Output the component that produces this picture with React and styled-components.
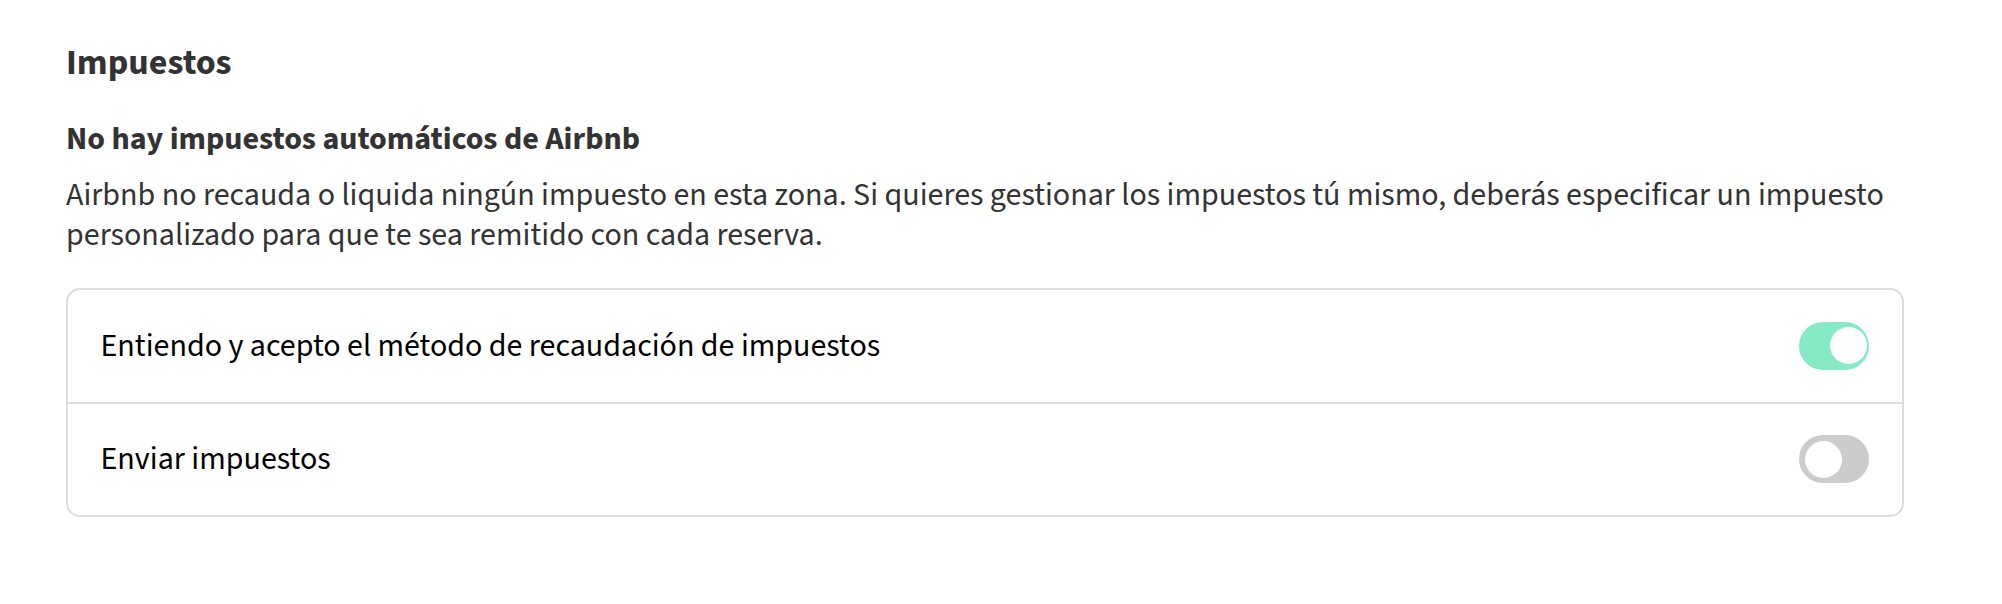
import React, { useState } from 'react';
import styled, { createGlobalStyle } from 'styled-components';

const GlobalStyle = createGlobalStyle`
  html, body {
    margin: 0;
    padding: 0;
    background: #ffffff;
  }
  body {
    font-family: "Source Sans Pro", "Source Sans 3", Lato, sans-serif;
    -webkit-font-smoothing: antialiased;
  }
`;

const Page = styled.div`
  padding: 41px 98px 40px 66px;
`;

const Section = styled.section`
  max-width: 1838px;
`;

const Title = styled.h2`
  margin: 0 0 34px;
  font-size: 36px;
  line-height: 44px;
  font-weight: 700;
  color: #333333;
`;

const Subtitle = styled.h3`
  margin: 0 0 16px;
  font-size: 32px;
  line-height: 40px;
  font-weight: 700;
  color: #333333;
`;

const Description = styled.p`
  margin: 0 0 33px;
  font-size: 32px;
  line-height: 40px;
  color: #333333;
`;

const Card = styled.div`
  border: 2px solid #dddddd;
  border-radius: 14px;
  overflow: hidden;
`;

const Row = styled.div`
  display: flex;
  align-items: center;
  justify-content: space-between;
  min-height: 111.5px;
  padding: 0 33px 0 32.5px;
  & + & {
    border-top: 2px solid #dddddd;
  }
`;

const RowLabel = styled.span`
  font-size: 32px;
  color: #000000;
`;

const Track = styled.button`
  position: relative;
  flex: none;
  width: 70px;
  height: 48px;
  padding: 0;
  border: none;
  border-radius: 24px;
  cursor: pointer;
  background: ${p => (p.$on ? '#86eac5' : '#cccccc')};
  transition: background 0.2s;
`;

const Knob = styled.span`
  position: absolute;
  top: 5.5px;
  left: ${p => (p.$on ? '30.5px' : '5.5px')};
  width: 37px;
  height: 37px;
  border-radius: 50%;
  background: #ffffff;
  transition: left 0.2s;
`;

const Toggle = ({ on, onChange }) => (
  <Track $on={on} onClick={() => onChange(!on)} aria-pressed={on}>
    <Knob $on={on} />
  </Track>
);

export default function App() {
  const [accept, setAccept] = useState(true);
  const [send, setSend] = useState(false);

  return (
    <Page>
      <GlobalStyle />
      <Section>
        <Title>Impuestos</Title>
        <Subtitle>No hay impuestos automáticos de Airbnb</Subtitle>
        <Description>
          Airbnb no recauda o liquida ningún impuesto en esta zona. Si quieres gestionar los impuestos tú mismo, deberás especificar un impuesto personalizado para que te sea remitido con cada reserva.
        </Description>
        <Card>
          <Row>
            <RowLabel>Entiendo y acepto el método de recaudación de impuestos</RowLabel>
            <Toggle on={accept} onChange={setAccept} />
          </Row>
          <Row>
            <RowLabel>Enviar impuestos</RowLabel>
            <Toggle on={send} onChange={setSend} />
          </Row>
        </Card>
      </Section>
    </Page>
  );
}
